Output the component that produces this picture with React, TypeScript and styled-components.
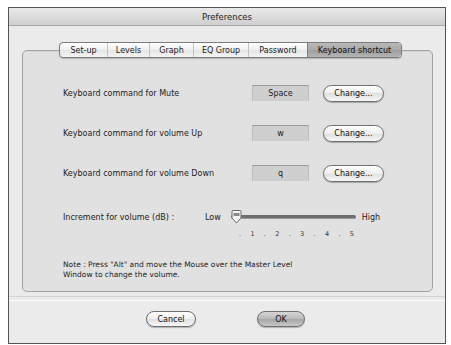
import styled, { createGlobalStyle } from "styled-components";

const GlobalStyle = createGlobalStyle`
  html, body {
    margin: 0;
    padding: 0;
    background: #ffffff;
  }
  body {
    font-family: "DejaVu Sans", "Liberation Sans", sans-serif;
    font-size: 8px;
    color: #222;
  }
`;

const Window = styled.div`
  margin: 7px 0 0 8px;
  width: 436px;
  height: 335px;
  border: 1px solid #555;
  background: #ebebeb;
  display: flex;
  flex-direction: column;
`;

const TitleBar = styled.div`
  height: 17px;
  border-bottom: 1px solid #a6a6a6;
  background: linear-gradient(#e9e9e9, #cfcfcf);
  display: flex;
  align-items: center;
  justify-content: center;
  font-size: 8.5px;
  color: #222;
`;

const Body = styled.div`
  padding: 16px 12px 0 13px;
  display: flex;
  flex-direction: column;
`;

const TabBar = styled.div`
  align-self: center;
  margin-left: 6px;
  display: flex;
  height: 14px;
  border: 1px solid #7c7c7c;
  border-radius: 4px;
  overflow: hidden;
  position: relative;
  z-index: 1;
  background: linear-gradient(#ffffff, #efefef 50%, #e4e4e4 50%, #f4f4f4);
  box-shadow: 0 1px 1px rgba(0, 0, 0, 0.2);
`;

const Tab = styled.div<{ w: number; active?: boolean }>`
  width: ${(p) => p.w}px;
  display: flex;
  align-items: center;
  justify-content: center;
  border-left: 1px solid #c4c4c4;
  font-size: 8px;
  &:first-child {
    border-left: none;
  }
  ${(p) =>
    p.active &&
    `
    background: linear-gradient(#b9b9b9, #a9a9a9 50%, #9c9c9c 50%, #b4b4b4);
    border-left-color: #7c7c7c;
    color: #111;
  `}
`;

const Box = styled.div`
  margin-top: -8px;
  height: 242px;
  border: 1px solid #a2a2a2;
  border-radius: 5px;
  background: #e1e1e1;
  box-shadow: inset 0 1px 1px rgba(0, 0, 0, 0.06);
  padding: 33px 0 0 40px;
  box-sizing: border-box;
  display: flex;
  flex-direction: column;
`;

const Row = styled.div`
  display: flex;
  align-items: center;
  height: 18px;
  margin-bottom: 22px;
`;

const Label = styled.div`
  width: 189px;
  font-size: 8px;
`;

const ValueField = styled.div`
  width: 57px;
  height: 16px;
  box-sizing: border-box;
  background: #cfcfcf;
  border-top: 1px solid #9a9a9a;
  border-left: 1px solid #bcbcbc;
  border-right: 1px solid #bcbcbc;
  display: flex;
  align-items: center;
  justify-content: center;
  font-size: 8px;
`;

const PillButton = styled.div<{ w: number; primary?: boolean }>`
  width: ${(p) => p.w}px;
  height: 16px;
  box-sizing: border-box;
  border: 1px solid #6f6f6f;
  border-radius: 9px;
  display: flex;
  align-items: center;
  justify-content: center;
  font-size: 8px;
  color: #111;
  background: ${(p) =>
    p.primary
      ? "linear-gradient(#d6d6d6, #b8b8b8 50%, #a6a6a6 50%, #c6c6c6)"
      : "linear-gradient(#ffffff, #eeeeee 50%, #e0e0e0 50%, #f6f6f6)"};
  box-shadow: 0 1px 1px rgba(0, 0, 0, 0.25);
`;

const ChangeButton = styled(PillButton)`
  margin-left: 14px;
  height: 17px;
`;

const SliderRow = styled.div`
  display: flex;
  align-items: center;
  height: 14px;
  margin-top: 6px;
`;

const SliderLabel = styled.div`
  width: 142px;
  font-size: 8px;
`;

const EndLabel = styled.div`
  font-size: 8px;
`;

const Track = styled.div`
  margin: 0 6px 0 10px;
  width: 125px;
  height: 12px;
  display: flex;
  align-items: center;
  position: relative;
`;

const TrackLine = styled.div`
  flex: 1;
  height: 3px;
  border-radius: 2px;
  background: #6e6e6e;
  border-bottom: 1px solid #9a9a9a;
`;

const Thumb = styled.svg`
  position: absolute;
  left: 0;
  top: -1px;
`;

const Ticks = styled.div`
  display: flex;
  justify-content: space-between;
  align-self: flex-start;
  width: 115px;
  margin: 6px 0 0 176px;
  font-size: 6.5px;
  color: #333;
`;

const Note = styled.div`
  margin-top: 22px;
  font-size: 7.5px;
  line-height: 10px;
`;

const Separator = styled.div`
  margin: 4px -12px 0 -13px;
  height: 3px;
  border-top: 1px solid #d4d4d4;
  border-bottom: 1px solid #fbfbfb;
`;

const Footer = styled.div`
  display: flex;
  justify-content: center;
  gap: 61px;
  margin-top: 10px;
  padding-right: 4px;
`;

const tabs = [
  { name: "Set-up", w: 47 },
  { name: "Levels", w: 41 },
  { name: "Graph", w: 43 },
  { name: "EQ Group", w: 54 },
  { name: "Password", w: 58 },
  { name: "Keyboard shortcut", w: 93 },
];

const commands = [
  { label: "Keyboard command for Mute", value: "Space" },
  { label: "Keyboard command for volume Up", value: "w" },
  { label: "Keyboard command for volume Down", value: "q" },
];

const ticks = [".", "1", ".", "2", ".", "3", ".", "4", ".", "5"];

export default function App() {
  return (
    <>
      <GlobalStyle />
      <Window>
        <TitleBar>Preferences</TitleBar>
        <Body>
          <TabBar>
            {tabs.map((t) => (
              <Tab key={t.name} w={t.w} active={t.name === "Keyboard shortcut"}>
                {t.name}
              </Tab>
            ))}
          </TabBar>
          <Box>
            {commands.map((c) => (
              <Row key={c.label}>
                <Label>{c.label}</Label>
                <ValueField>{c.value}</ValueField>
                <ChangeButton w={61}>Change...</ChangeButton>
              </Row>
            ))}
            <SliderRow>
              <SliderLabel>Increment for volume (dB) :</SliderLabel>
              <EndLabel>Low</EndLabel>
              <Track>
                <TrackLine />
                <Thumb width="11" height="14" viewBox="0 0 11 14">
                  <path
                    d="M1 1.5 Q1 0.5 2 0.5 H9 Q10 0.5 10 1.5 V8 L5.5 13 L1 8 Z"
                    fill="#f4f4f4"
                    stroke="#6a6a6a"
                    strokeWidth="1"
                  />
                  <path d="M2.5 3 H8.5 V6 H2.5 Z" fill="#8a8a8a" />
                </Thumb>
              </Track>
              <EndLabel>High</EndLabel>
            </SliderRow>
            <Ticks>
              {ticks.map((t, i) => (
                <span key={i}>{t}</span>
              ))}
            </Ticks>
            <Note>
              Note : Press "Alt" and move the Mouse over the Master Level
              <br />
              Window to change the volume.
            </Note>
          </Box>
          <Separator />
          <Footer>
            <PillButton w={50}>Cancel</PillButton>
            <PillButton w={48} primary>
              OK
            </PillButton>
          </Footer>
        </Body>
      </Window>
    </>
  );
}
